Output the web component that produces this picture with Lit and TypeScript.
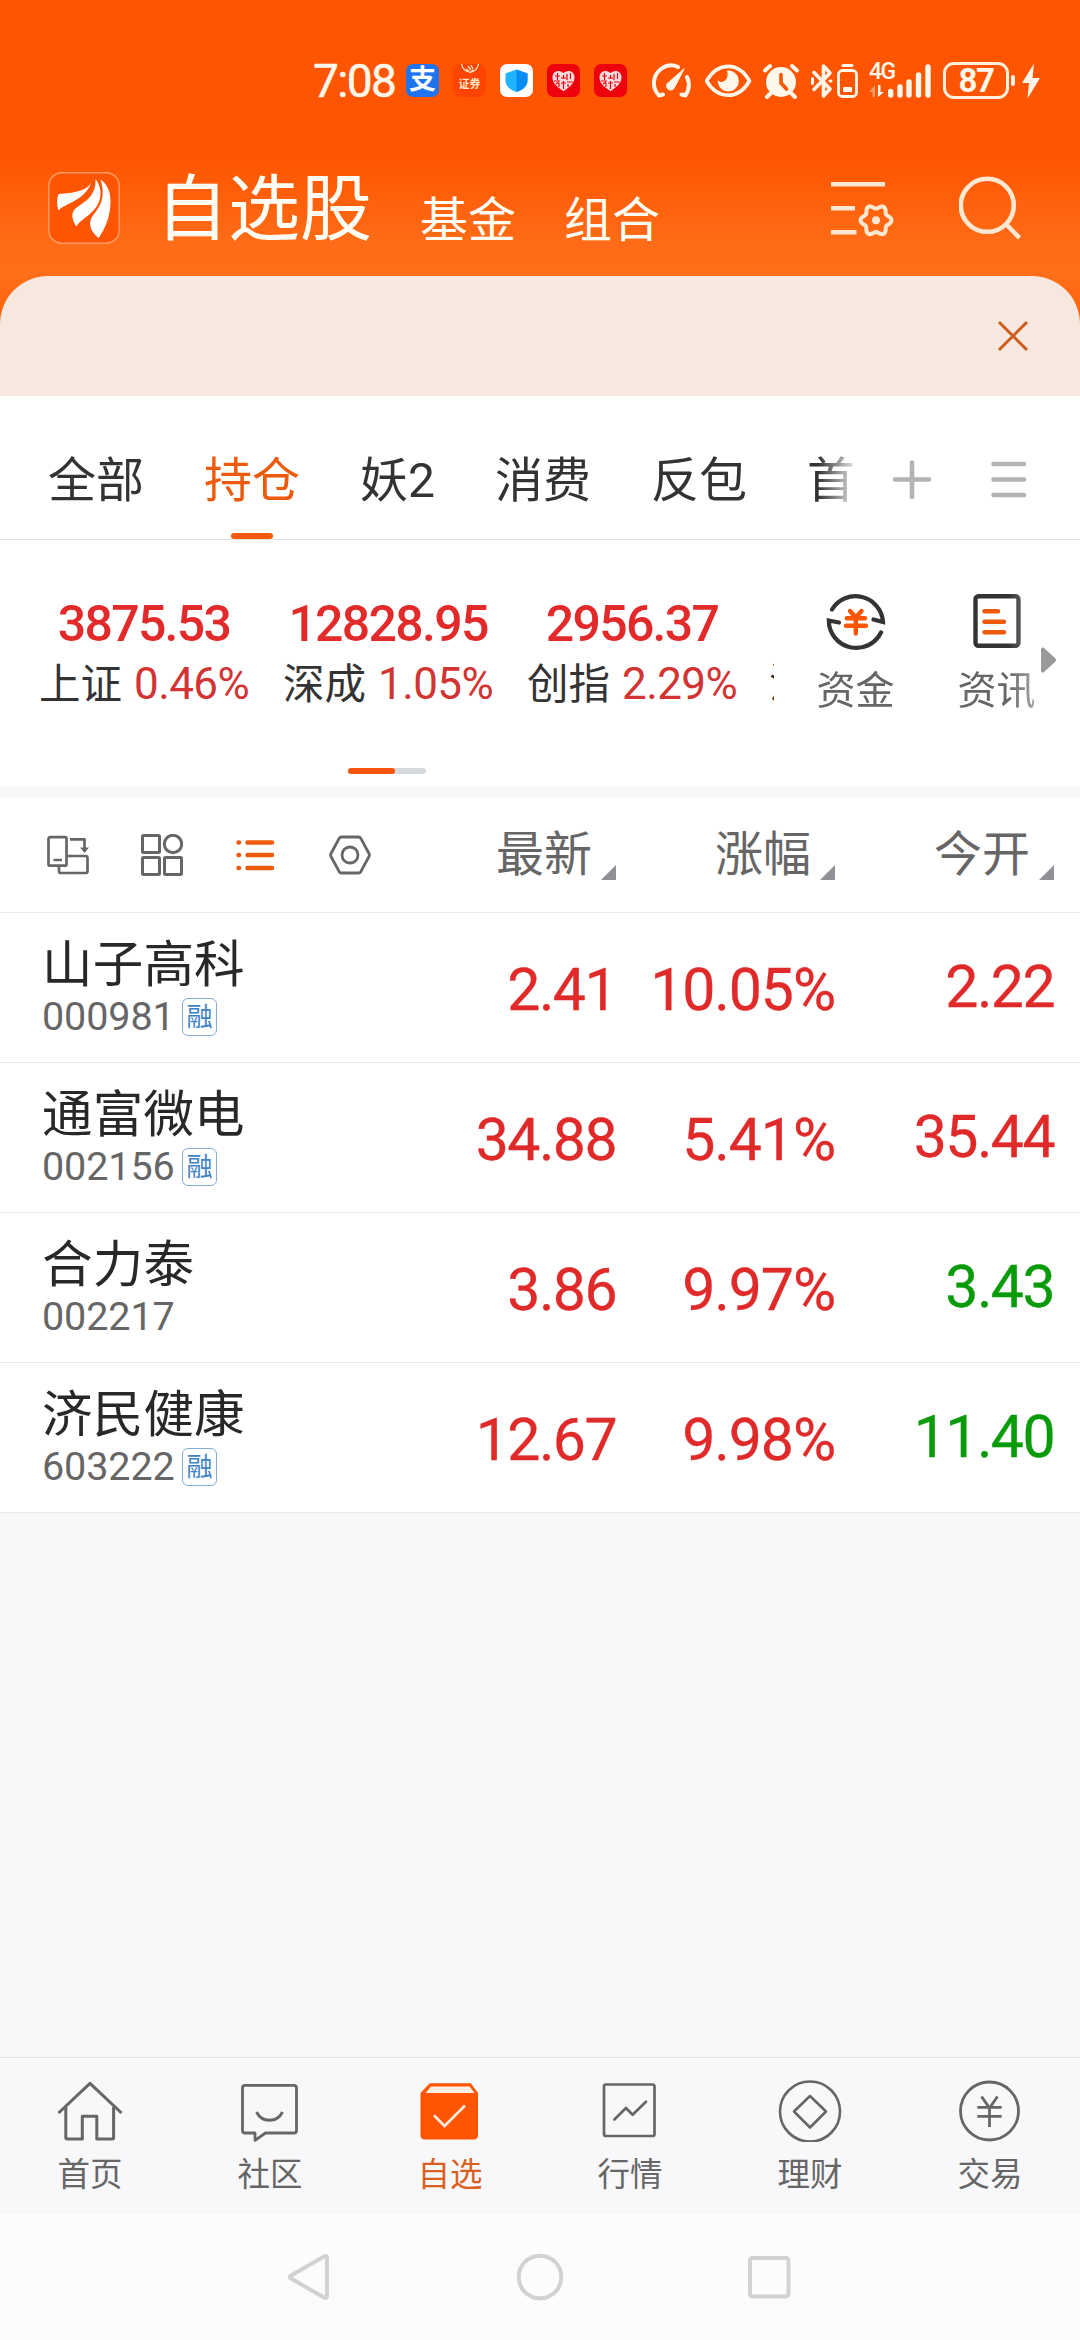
import { LitElement, html, css, svg } from "lit";
import { customElement } from "lit/decorators.js";
import { classMap } from "lit/directives/class-map.js";

interface Stock {
  name: string;
  code: string;
  margin: boolean;
  last: string;
  change: string;
  open: string;
  openUp: boolean;
}

const STOCKS: Stock[] = [
  { name: "山子高科", code: "000981", margin: true, last: "2.41", change: "10.05%", open: "2.22", openUp: true },
  { name: "通富微电", code: "002156", margin: true, last: "34.88", change: "5.41%", open: "35.44", openUp: true },
  { name: "合力泰", code: "002217", margin: false, last: "3.86", change: "9.97%", open: "3.43", openUp: false },
  { name: "济民健康", code: "603222", margin: true, last: "12.67", change: "9.98%", open: "11.40", openUp: false },
];

const INDICES = [
  { value: "3875.53", name: "上证", change: "0.46%" },
  { value: "12828.95", name: "深成", change: "1.05%" },
  { value: "2956.37", name: "创指", change: "2.29%" },
];

const GROUPS = ["全部", "持仓", "妖2", "消费", "反包", "首"];
const COLUMNS = ["最新", "涨幅", "今开"];

const heart = svg`
  <path d="M16.500 27 C11 23.500 5.500 19.500 5.500 13.500 C5.500 7 12 5 16.500 9 C21 5 27.500 7 27.500 13.500 C27.500 19.500 22 23.500 16.500 27Z" fill="#fbdcde"/>
  <path d="M8 12h5M10.500 9v7M7 17h6M16.500 11v4M14 14h5M20 10v6M23.500 9v6M20 18h6M16.500 17v8M12 19v4M21 20v3M9 20l3-2M14 19h5" stroke="#f0000c" stroke-width="1.200" fill="none"/>`;

const NAV = [
  {
    label: "首页",
    icon: svg`<g fill="none" stroke="#666" stroke-width="3" stroke-linejoin="round">
      <path d="M1.500 33 33 3.300 64.500 33"/><path d="M8.800 27v30.500q0 1.500 1.500 1.500h15V36.300h14.500V59h15.300q1.500 0 1.500-1.500V27"/></g>`,
  },
  {
    label: "社区",
    icon: svg`<g fill="none" stroke="#666" stroke-width="2.800" stroke-linejoin="round">
      <path d="M8 5.400h49q2.500 0 2.500 2.500v42.600q0 2.500-2.500 2.500H28.500L18 60.300V53H8q-2.500 0-2.500-2.500V7.900q0-2.500 2.500-2.500Z"/>
      <path d="M19.500 32c5.500 11 20.500 11 26 0"/></g>`,
  },
  {
    label: "自选",
    icon: svg`<path d="M12.800 3.300h41L61 13v42q0 4.500-4.500 4.500H8Q3.500 59.500 3.500 55V13Z" fill="#ff5500"/>
      <path d="M14 6.500h38.600l5 6.600H8.600Z" fill="#fdeee6"/>
      <path d="M17 35.300 27.600 46 48 25.500" fill="none" stroke="#ffe6d8" stroke-width="2.800"/>`,
  },
  {
    label: "行情",
    icon: svg`<g fill="none" stroke="#666" stroke-width="2.700" stroke-linejoin="round">
      <rect x="7" y="4.500" width="50.500" height="51.500" rx="2"/><path d="M17.400 39.500 29 28 35.600 34.700 49 21.700" stroke-linecap="round"/></g>`,
  },
  {
    label: "理财",
    icon: svg`<g fill="none" stroke="#666" stroke-width="2.600" stroke-linejoin="round">
      <circle cx="33" cy="31.500" r="30"/><path d="M33 16 49 31.500 33 47.500 17 31.500Z"/></g>`,
  },
  {
    label: "交易",
    icon: svg`<g fill="none" stroke="#666" stroke-width="2.800">
      <circle cx="32.500" cy="31" r="29"/><path d="M24.500 16.500 32.500 28 40.500 16.500M20.300 27.300h24.400M20.300 36.300h24.400M32.500 27v20"/></g>`,
  },
];

// Closed outline of a six-lobed gear around the given centre.
function gearPath(cx: number, cy: number, radius: number, depth: number): string {
  const points: string[] = [];
  for (let i = 0; i < 120; i++) {
    const a = (i / 120) * Math.PI * 2;
    const r = radius + depth * Math.cos(6 * a);
    points.push(`${(cx + r * Math.cos(a)).toFixed(2)} ${(cy + r * Math.sin(a)).toFixed(2)}`);
  }
  return `M${points.join("L")}Z`;
}

@customElement("status-bar")
export class StatusBar extends LitElement {
  static styles = css`
    :host {
      display: flex;
      align-items: center;
      height: 161px;
      padding-left: 313px;
      box-sizing: border-box;
      color: #fff7ea;
      font-family: Roboto, "Noto Sans CJK SC", sans-serif;
    }
    svg { display: block; flex: none; }
    .time { font-size: 46px; line-height: 46px; padding-top: 1px; width: 93px; letter-spacing: -1.6px; font-weight: 400; -webkit-text-stroke: 0.5px; }
    .apps { display: flex; gap: 14px; margin-right: 25px; }
    .app { width: 33px; height: 33px; border-radius: 7px; overflow: hidden; display: flex; justify-content: center; align-items: center; }
    .pay { background: #1e74ee; color: #fff; font-size: 27px; font-weight: 700; line-height: 35px; }
    .broker { background: #ff4400; flex-direction: column; justify-content: flex-start; }
    .broker-text { font-size: 11px; line-height: 11px; font-weight: 700; color: #ffe3c8; margin-top: 2px; }
    .guard { background: #fff; }
    .hall { background: #ee000c; }
    .net { display: flex; flex-direction: column; width: 19px; height: 35px; }
    .gen { font-size: 23px; line-height: 17px; font-weight: 500; letter-spacing: -1.5px; white-space: nowrap; }
    .battery {
      width: 66px; height: 37px; border: 3px solid #fff0de; border-radius: 11px; box-sizing: border-box;
      margin-left: 12px; font-size: 33px; line-height: 32px; font-weight: 700; text-align: center; letter-spacing: -1.5px;
    }
    .cap { width: 4px; height: 11px; border-radius: 2px; background: #fff0de; margin: 0 7px 0 2px; }
  `;

  render() {
    return html`
      <span class="time">7:08</span>
      <div class="apps">
        <div class="app pay">支</div>
        <div class="app broker">
          <svg width="20" height="13" viewBox="0 0 20 13" fill="none" stroke="#ffe3c8" stroke-width="1.300">
            <path d="M1.500 0a8.600 9.500 0 0 0 17 0M6 5l3 2M8 2l3 4M11 1l2 4M10 9l3-3" />
          </svg>
          <span class="broker-text">证券</span>
        </div>
        <div class="app guard">
          <svg width="33" height="33" viewBox="0 0 33 33">
            <path d="M16.500 5.500 27.500 9.500V16c0 6-4 9.500-11 12C9.500 25.500 5.500 22 5.500 16V9.500Z" fill="#1fb4ff" />
            <path d="M16.500 5.500 27.500 9.500V16c0 6-4 9.500-11 12Z" fill="#0a8cf5" />
          </svg>
        </div>
        <div class="app hall"><svg width="33" height="33" viewBox="0 0 33 33">${heart}</svg></div>
        <div class="app hall"><svg width="33" height="33" viewBox="0 0 33 33">${heart}</svg></div>
      </div>
      <svg width="53" height="36" viewBox="0 0 53 36" fill="none" stroke="#fff7ea" stroke-width="4" stroke-linecap="round">
        <path d="M7 32.500C-1 24 1 12 9 6c5.500-4 12-4.500 17-2M35 14c3 6 2.500 12-1.500 18.500M7 32.500l4-1M33.500 32.500l-4-1" />
        <path d="M32 6 22.500 24.500A4.200 4.200 0 1 1 17 19Z" fill="#fff7ea" stroke-width="1" />
      </svg>
      <svg width="58" height="36" viewBox="0 0 58 36">
        <path d="M1.500 18C13-1.500 33.500-1.500 44.500 18 33.500 37 13 37 1.500 18Z" fill="none" stroke="#fff7ea" stroke-width="3.600" stroke-linejoin="round" />
        <path d="M22 7.500A10.500 10.500 0 1 1 12.800 17C17 22.500 25 16 22 7.500Z" fill="#fff7ea" />
      </svg>
      <svg width="48" height="36" viewBox="0 0 48 36">
        <circle cx="18" cy="19" r="15" fill="#fff7ea" />
        <path d="M2 7.500 7 3M34 7.500 29 3M8 30l-4 4M28 30l4 4" stroke="#fff7ea" stroke-width="4" stroke-linecap="round" />
        <path d="M18 11.500v8.500l5.500 6" fill="none" stroke="#ff5500" stroke-width="3.600" stroke-linecap="round" />
      </svg>
      <svg width="58" height="36" viewBox="0 0 58 36" fill="none" stroke="#fff7ea" stroke-width="3.600" stroke-linejoin="round" stroke-linecap="round">
        <path d="M3 9.500 19 26l-6.500 7V3L19 10 3 26.500" />
        <path d="M1.500 15.500v5M19 18h1" stroke-width="3" />
        <rect x="27.500" y="7.500" width="18" height="26" rx="4" stroke-width="2.800" />
        <path d="M32 2.500h9" stroke-width="3" />
        <path d="M33 25h7v3h-7Z" fill="#fff7ea" stroke-width="2" />
      </svg>
      <div class="net">
        <span class="gen">4G</span>
        <svg width="18" height="18" viewBox="0 0 18 18">
          <path d="M0 12 6 5v12H3.500v-5Z" fill="#ff9b66" />
          <path d="M9 5h2.500v7H15l-6 5Z" fill="#fff7ea" />
        </svg>
      </div>
      <svg width="43" height="34" viewBox="0 0 43 34" stroke="#fff7ea" stroke-width="5.400" stroke-linecap="round">
        <path d="M2.700 27.500V31M12 23V31M21 18V31M30.500 11V31M40 3V31" />
      </svg>
      <div class="battery">87</div>
      <div class="cap"></div>
      <svg width="18" height="36" viewBox="0 0 18 36"><path d="M12 .5 0 20h7L5.500 35.500 18 15H10.500Z" fill="#fff7ea" /></svg>
    `;
  }
}

@customElement("app-root")
export class AppRoot extends LitElement {
  static styles = css`
    :host {
      display: flex;
      flex-direction: column;
      width: 1080px;
      height: 2340px;
      overflow: hidden;
      background: #f7f8fa;
      color: #333;
      font-family: Roboto, "Noto Sans CJK SC", sans-serif;
    }
    svg { display: block; flex: none; }

    .hero { background: linear-gradient(#ff5500 0, #ff5500 158px, #ff6b16 240px, #ff6e19 276px, #ff6105 324px); }
    .title-bar { display: flex; align-items: center; height: 115px; box-sizing: border-box; padding: 0 57px 21px 48px; color: #fffdf4; }
    .sections { display: flex; align-items: flex-end; margin-left: 36px; flex: 1; font-size: 48px; line-height: 66px; gap: 48px; padding-top: 8px; }
    .section-main { font-size: 72px; line-height: 80px; margin-bottom: 4px; }
    .tools { display: flex; gap: 64px; align-items: center; }
    .banner { display: flex; justify-content: flex-end; align-items: center; height: 120px; box-sizing: border-box; background: #f6e7df; border-radius: 48px 48px 0 0; padding-right: 51px; }

    .groups { display: flex; height: 143px; background: #fff; border-bottom: 1px solid #e3e3e3; padding-left: 48px; }
    .group-list { display: flex; gap: 60px; width: 807px; overflow: hidden; mask-image: linear-gradient(90deg, #000 770px, transparent 812px); }
    .group { display: flex; flex-direction: column; align-items: center; font-size: 48px; white-space: nowrap; }
    .group-name { line-height: 48px; margin-top: 61px; margin-bottom: auto; }
    .group.active { color: #ee5a0c; }
    .group-bar { width: 42px; height: 6px; border-radius: 3px; }
    .active .group-bar { background: #f2590f; }
    .group-tools { display: flex; gap: 58px; padding: 64px 0 0 37px; }

    .market { display: flex; height: 246px; background: #fff; }
    .indices { display: flex; flex-direction: column; width: 774px; overflow: hidden; align-items: center; }
    .index-row { display: flex; width: 752px; margin-left: 22px; padding-top: 59px; flex: 1; overflow: hidden; }
    .index { width: 244px; flex: none; text-align: center; white-space: nowrap; }
    .index-value { font-size: 50px; line-height: 50px; font-weight: 500; color: #e22a2a; letter-spacing: -1.7px; }
    .index-label { font-size: 41.5px; line-height: 50px; margin-top: 10px; color: #333; }
    .index-change { color: #d23434; font-size: 44px; margin-left: 12px; letter-spacing: -0.6px; }
    .index.next { text-align: left; padding-left: 15px; box-sizing: border-box; }
    .index.next .index-label { margin-top: 60px; }
    .pager { width: 78px; height: 6px; border-radius: 3px; background: #d5d8dd; margin-bottom: 12px; }
    .pager-on { width: 47px; height: 6px; border-radius: 3px; background: #f9560a; }
    .shortcut-area { position: relative; flex: 1; }
    .shortcuts { display: flex; padding: 51px 0 0 11px; mask-image: linear-gradient(90deg, #000 235px, rgba(0, 0, 0, 0.35) 275px); }
    .shortcut { display: flex; flex-direction: column; align-items: center; width: 141px; font-size: 39px; line-height: 50px; color: #666; }
    .shortcut-name { margin-top: 15px; white-space: nowrap; }
    .more { position: absolute; left: 267px; top: 107px; }

    .table { background: #fff; margin-top: 12px; }
    .row { display: grid; grid-template-columns: 1fr 219px 219px 219px; height: 149px; padding: 0 26px 0 42px; border-bottom: 1px solid #ebebeb; align-items: center; }
    .head { height: 114px; color: #666; }
    .views { display: flex; gap: 52px; padding-left: 5px; width: 340px; }
    .col { display: flex; justify-content: flex-end; align-items: flex-end; gap: 9px; font-size: 48px; line-height: 50px; }
    .stock-name { font-size: 50.5px; line-height: 52px; color: #282828; letter-spacing: 0.2px; white-space: nowrap; }
    .stock-meta { display: flex; align-items: center; height: 40px; margin-top: 6px; font-size: 39.5px; line-height: 40px; color: #666; }
    .code { letter-spacing: -0.1px; width: 140px; }
    .badge { width: 35px; height: 38px; box-sizing: border-box; border: 1.5px solid #83aed8; border-radius: 6px; color: #3f82c6; font-size: 26px; line-height: 38px; text-align: center; display: flex; justify-content: center; align-items: center; }
    .num { font-size: 59px; line-height: 60px; text-align: right; color: #e02a2a; letter-spacing: -1.6px; padding-top: 4px; -webkit-text-stroke: 0.3px; }
    .num.change { letter-spacing: -1.1px; }
    .num.open { padding: 0 0 2px; }
    .num.down { color: #0a9b0a; }

    .nav { display: flex; margin-top: auto; height: 156px; background: #f8f8fb; border-top: 1px solid #e2e2e4; }
    .nav-item { display: flex; flex-direction: column; align-items: center; width: 180px; padding-top: 22px; font-size: 32.5px; color: #666; }
    .nav-name { line-height: 36px; margin-top: 15px; }
    .nav-item.active { color: #d9601f; }
    .system { display: flex; height: 126px; background: #fcfcfc; align-items: center; justify-content: center; gap: 182px; }
  `;

  render() {
    return html`
      <header class="hero">
        <status-bar></status-bar>
        <div class="title-bar">
          <svg width="72" height="72" viewBox="0 0 72 72">
            <rect x="0.800" y="0.800" width="70.400" height="70.400" rx="13" fill="#ff5500" stroke="#ff9a62" stroke-width="1.500" />
            <g fill="#fff">
              <path d="M44.700 7C42.500 17 30 21 10.500 22 8.500 27 8.500 33 10.500 38.500 16 31 38 30 44.700 7Z" />
              <path d="M47.500 7C48 22 40 28 30 34.500 22.500 39.500 23 46 28.300 54.500 33 46 53 40 52.500 20 52 14 50 10 47.500 7Z" />
              <path d="M52.500 7.500C59 12 62.500 19 62.500 29 62.500 45 57 57 50.500 66 43.500 60 40 53 43.500 46 48 38 59.500 30 52.500 7.500Z" />
            </g>
          </svg>
          <div class="sections">
            <span class="section-main">自选股</span><span>基金</span><span>组合</span>
          </div>
          <div class="tools">
            <svg width="64" height="64" viewBox="0 0 64 64" fill="none" stroke="#ffe8d2" stroke-width="4.600">
              <path d="M0 8.300h54M0 32.300h24M0 56.300h25.500" />
              <path d="${gearPath(45, 44.3, 13.6, 1.9)}" stroke-width="4" />
              <circle cx="45" cy="44.300" r="4" fill="#ffe8d2" stroke="none" />
            </svg>
            <svg width="64" height="64" viewBox="0 0 64 64" fill="none" stroke="#ffe8d2" stroke-width="4.600">
              <circle cx="28.300" cy="29.300" r="26.500" /><path d="M47 48 60.500 62" />
            </svg>
          </div>
        </div>
        <div class="banner">
          <svg width="32" height="32" viewBox="0 0 32 32" stroke="#cf5a1c" stroke-width="3"><path d="M2 2 30 30M30 2 2 30" /></svg>
        </div>
      </header>

      <nav class="groups">
        <div class="group-list">
          ${GROUPS.map(
            (g, i) => html`<div class=${classMap({ group: true, active: i === 1 })}>
              <span class="group-name">${g}</span><span class="group-bar"></span>
            </div>`
          )}
        </div>
        <div class="group-tools">
          <svg width="40" height="40" viewBox="0 0 40 40" stroke="#b3b3b3" stroke-width="4.600" stroke-linecap="round"><path d="M20 2.500V37M3 19.500H37" /></svg>
          <svg width="38" height="40" viewBox="0 0 38 40" stroke="#b3b3b3" stroke-width="4.600" stroke-linecap="round"><path d="M3.500 4H34M3.500 19.500H34M3.500 35H34" /></svg>
        </div>
      </nav>

      <section class="market">
        <div class="indices">
          <div class="index-row">
            ${INDICES.map(
              (x) => html`<div class="index">
                <div class="index-value">${x.value}</div>
                <div class="index-label">${x.name}<span class="index-change">${x.change}</span></div>
              </div>`
            )}
            <div class="index next"><div class="index-label">沪</div></div>
          </div>
          <div class="pager"><div class="pager-on"></div></div>
        </div>
        <div class="shortcut-area">
          <div class="shortcuts">
            <div class="shortcut">
              <svg width="60" height="60" viewBox="0 0 60 60" fill="none" stroke="#333" stroke-width="4.200" stroke-linecap="round">
                <path d="M6 18.500A27.500 27.500 0 0 1 57 31L47.500 28.500M55 41.500A27.500 27.500 0 0 1 2.800 29.500L13 31.500" />
                <path d="M24 20 29.800 26.500 35.500 20M20.800 27.200H39M20 34.800H40M29.800 27V42.500" stroke="#ff5500" stroke-width="4.400" />
              </svg>
              <span class="shortcut-name">资金</span>
            </div>
            <div class="shortcut">
              <svg width="60" height="60" viewBox="0 0 60 60" fill="none" stroke="#333" stroke-width="4.400" stroke-linecap="round">
                <rect x="8.500" y="5.200" width="43" height="49.600" rx="3" />
                <path d="M17.500 20.200H31M17.500 30.800H37M17.500 41.200H37" stroke="#ee5a0c" />
              </svg>
              <span class="shortcut-name">资讯</span>
            </div>
          </div>
          <svg class="more" width="16" height="26" viewBox="0 0 16 26"><path d="M0 2q0-2 2.500-1.500L14 11q2 2 0 4L2.500 25.500Q0 26 0 24Z" fill="#999" /></svg>
        </div>
      </section>

      <section class="table">
        <div class="row head">
          <div class="views">
            <svg width="42" height="42" viewBox="0 0 42 42" fill="none" stroke="#666" stroke-width="2.700" stroke-linejoin="round">
              <rect x="1.500" y="3.200" width="18" height="28.500" rx="1.500" />
              <path d="M12 31.500V37q0 2 2 2h24.500q2 0 2-2V24q0-2-2-2H20M23 5.300H37.500V15" />
              <path d="M33 13.500h9l-4.500 5.500Z" fill="#666" stroke="none" /><path d="M6.500 26h8.500" stroke-width="2.400" />
            </svg>
            <svg width="42" height="42" viewBox="0 0 42 42" fill="none" stroke="#666" stroke-width="3">
              <rect x="1.500" y="1.500" width="17" height="17" rx="1" /><circle cx="32" cy="10" r="8.700" />
              <rect x="1.500" y="23.500" width="17" height="17" rx="1" /><rect x="23.500" y="23.500" width="17" height="17" rx="1" />
            </svg>
            <svg width="42" height="42" viewBox="0 0 42 42" stroke="#ee5a0c" stroke-width="4.500" stroke-linecap="round">
              <path d="M3.500 8.500h.5M12.500 8.500h24.500M3.500 21h.5M12.500 21h24.500M3.500 34h.5M12.500 34h24.500" />
            </svg>
            <svg width="42" height="42" viewBox="0 0 42 42" fill="none" stroke="#666" stroke-width="2.800" stroke-linejoin="round">
              <path d="M12.500 3h17q1.500 0 2.300 1.300L40 19.500q.8 1.500 0 3L31.800 37.700Q31 39 29.500 39h-17Q11 39 10.200 37.700L2 22.500q-.8-1.500 0-3L10.200 4.300Q11 3 12.500 3Z" />
              <circle cx="21" cy="21" r="8" />
            </svg>
          </div>
          ${COLUMNS.map(
            (c) => html`<div class="col"><span>${c}</span>
              <svg width="15" height="15" viewBox="0 0 15 15"><path d="M15 0V15H0Z" fill="#909096" /></svg>
            </div>`
          )}
        </div>
        ${STOCKS.map(
          (s) => html`<div class="row">
            <div>
              <div class="stock-name">${s.name}</div>
              <div class="stock-meta"><span class="code">${s.code}</span>${s.margin ? html`<span class="badge">融</span>` : null}</div>
            </div>
            <div class="num">${s.last}</div>
            <div class="num change">${s.change}</div>
            <div class=${classMap({ num: true, open: true, down: !s.openUp })}>${s.open}</div>
          </div>`
        )}
      </section>

      <nav class="nav">
        ${NAV.map(
          (n, i) => html`<div class=${classMap({ "nav-item": true, active: i === 2 })}>
            <svg width="66" height="62" viewBox="0 0 66 62">${n.icon}</svg>
            <span class="nav-name">${n.label}</span>
          </div>`
        )}
      </nav>
      <div class="system">
        <svg width="48" height="50" viewBox="0 0 48 50" fill="none" stroke="#d2d2d2" stroke-width="4" stroke-linejoin="round"><path d="M38 4.500Q41 3 41 6V44Q41 47 38 45.500L5 26.500Q2.500 25 5 23.500Z" /></svg>
        <svg width="48" height="50" viewBox="0 0 48 50" fill="none" stroke="#d2d2d2" stroke-width="4"><circle cx="24" cy="25" r="21.300" /></svg>
        <svg width="48" height="50" viewBox="0 0 48 50" fill="none" stroke="#d2d2d2" stroke-width="4"><rect x="4" y="6" width="38.500" height="38.500" rx="2.500" /></svg>
      </div>
    `;
  }
}
